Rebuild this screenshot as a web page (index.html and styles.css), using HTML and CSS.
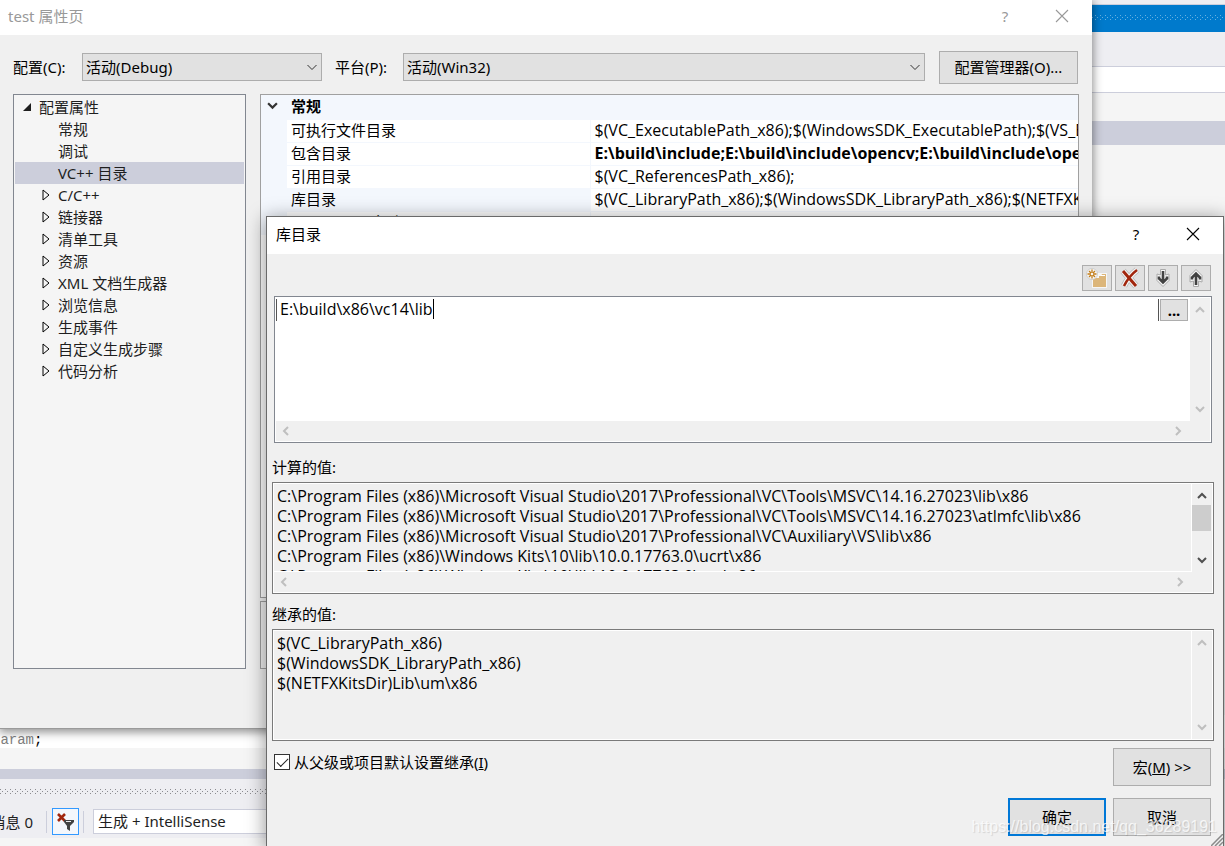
FILE: index.html
```html
<!DOCTYPE html>
<html lang="zh-CN">
<head>
<meta charset="utf-8">
<title>test 属性页</title>
<link rel="stylesheet" href="styles.css">
</head>
<body>
<svg class="defs" aria-hidden="true">
  <defs>
    <symbol id="up" viewBox="0 0 10 7"><path d="M1 6 5 2 9 6" fill="none" stroke="currentColor" stroke-width="2"/></symbol>
    <symbol id="down" viewBox="0 0 10 7"><path d="M1 1 5 5 9 1" fill="none" stroke="currentColor" stroke-width="2"/></symbol>
    <symbol id="left" viewBox="0 0 7 10"><path d="M6 1 2 5 6 9" fill="none" stroke="currentColor" stroke-width="2"/></symbol>
    <symbol id="right" viewBox="0 0 7 10"><path d="M1 1 5 5 1 9" fill="none" stroke="currentColor" stroke-width="2"/></symbol>
    <symbol id="thin-down" viewBox="0 0 10 7"><path d="M.5 1 5 5.500 9.500 1" fill="none" stroke="currentColor"/></symbol>
    <symbol id="close" viewBox="0 0 14 14"><path d="M1 1 13 13M13 1 1 13" fill="none" stroke="currentColor" stroke-width="1.100"/></symbol>
    <symbol id="tri" viewBox="0 0 8 12"><path d="M1 1V11L7 6Z" fill="none" stroke="currentColor"/></symbol>
    <symbol id="tri-open" viewBox="0 0 10 10"><path d="M9 1V9H1Z" fill="currentColor"/></symbol>
    <pattern id="dots-blue" width="5" height="6" patternUnits="userSpaceOnUse"><path d="M0 0h1v1H0zM2 2h1v1H2zM0 4h1v1H0z" fill="#66b0e0"/></pattern>
    <pattern id="dots-gray" width="5" height="6" patternUnits="userSpaceOnUse"><path d="M0 0h1v1H0zM2 2h1v1H2zM0 4h1v1H0z" fill="#8c8c90"/></pattern>
  </defs>
</svg>

<div class="ide">
  <div class="ide-top"></div>
  <div class="ide-title"><svg class="grip"><rect width="100%" height="6" fill="url(#dots-blue)"/></svg></div>
  <div class="ide-bar"></div>
  <div class="ide-field"></div>
  <div class="ide-gap"></div>
  <div class="ide-strip"></div>
  <div class="ide-body"></div>
  <div class="ide-code"><code><b>'</b>aram<i>;</i></code></div>
  <div class="ide-under"></div>
  <div class="ide-split"></div>
  <div class="ide-panel">
    <svg class="grip"><rect width="100%" height="6" fill="url(#dots-gray)"/></svg>
    <div class="ide-tools">
      <span class="msg"><span>消息 0</span></span>
      <span class="sep"></span>
      <button class="filter" aria-label="清除筛选器">
        <svg viewBox="0 0 20 20"><path d="M3 2 10 9M10 2 3 9" stroke="#a1260d" stroke-width="2.600"/><path d="M9 8H19V10L15 14V19L12 17V14L9 10Z" fill="#424242"/><path d="M11 9.500H16" stroke="#eeeef2"/></svg>
      </button>
      <span class="sep"></span>
      <select class="build" aria-label="生成"><option>生成 + IntelliSense</option></select>
    </div>
  </div>
  <div class="ide-foot"></div>
</div>

<section class="win props" aria-label="test 属性页">
  <header class="bar dim">
    <h1>test 属性页</h1>
    <button class="sys" aria-label="帮助">?</button>
    <button class="sys" aria-label="关闭"><svg class="x"><use href="#close"/></svg></button>
  </header>
  <div class="config">
    <label for="cfg">配置(C):</label>
    <span class="combo"><select id="cfg"><option>活动(Debug)</option></select><svg class="v"><use href="#thin-down"/></svg></span>
    <label for="plat">平台(P):</label>
    <span class="combo wide"><select id="plat"><option>活动(Win32)</option></select><svg class="v"><use href="#thin-down"/></svg></span>
    <button class="btn manager">配置管理器(O)...</button>
  </div>
  <div class="content">
    <ul class="tree">
      <li class="root"><svg class="open"><use href="#tri-open"/></svg>配置属性</li>
      <li><svg class="tri"></svg>常规</li>
      <li><svg class="tri"></svg>调试</li>
      <li class="on"><svg class="tri"></svg>VC++ 目录</li>
      <li><svg class="tri"><use href="#tri"/></svg>C/C++</li>
      <li><svg class="tri"><use href="#tri"/></svg>链接器</li>
      <li><svg class="tri"><use href="#tri"/></svg>清单工具</li>
      <li><svg class="tri"><use href="#tri"/></svg>资源</li>
      <li><svg class="tri"><use href="#tri"/></svg>XML 文档生成器</li>
      <li><svg class="tri"><use href="#tri"/></svg>浏览信息</li>
      <li><svg class="tri"><use href="#tri"/></svg>生成事件</li>
      <li><svg class="tri"><use href="#tri"/></svg>自定义生成步骤</li>
      <li><svg class="tri"><use href="#tri"/></svg>代码分析</li>
    </ul>
    <div class="right">
      <div class="grid">
        <table>
          <colgroup><col class="c-gut"><col class="c-name"><col></colgroup>
          <tr class="group"><td class="gut"><svg class="chev"><use href="#down"/></svg></td><th colspan="2">常规</th></tr>
          <tr><td class="gut"></td><td class="name">可执行文件目录</td><td class="path">$(VC_ExecutablePath_x86);$(WindowsSDK_ExecutablePath);$(VS_ExecutablePath)</td></tr>
          <tr><td class="gut"></td><td class="name">包含目录</td><td class="path bold">E:\build\include;E:\build\include\opencv;E:\build\include\opencv2</td></tr>
          <tr><td class="gut"></td><td class="name">引用目录</td><td class="path">$(VC_ReferencesPath_x86);</td></tr>
          <tr class="sel"><td class="gut"></td><td class="name">库目录</td><td class="path">$(VC_LibraryPath_x86);$(WindowsSDK_LibraryPath_x86);$(NETFXKitsDir)Lib\um\x86</td></tr>
          <tr><td class="gut"></td><td class="name">Windows 运行库目录</td><td class="path">$(WindowsSDK_MetadataPath);</td></tr>
        </table>
      </div>
      <div class="desc"></div>
    </div>
  </div>
</section>

<section class="win lib" aria-label="库目录">
  <header class="bar">
    <h2>库目录</h2>
    <button class="sys" aria-label="帮助">?</button>
    <button class="sys" aria-label="关闭"><svg class="x"><use href="#close"/></svg></button>
  </header>
  <div class="body">
    <div class="tools">
      <button class="tool" aria-label="新行">
        <svg viewBox="0 0 24 22"><path d="M8 6h14v15H7V11H3V3h6z" fill="#f6f6f6"/><path d="M8 20V11H14V9H16L17 7H21V20Z" fill="#dcb67a"/><path d="M16 8.500H20" stroke="#fff"/><circle cx="7" cy="7" r="5.500" fill="#f6f6f6" stroke="#bbb" stroke-width=".6"/><path d="M7 2.500V11.500M2.500 7H11.500M4 4 10 10M10 4 4 10" stroke="#c27d1a" stroke-width="1.300"/><circle cx="7" cy="7" r="1.300" fill="#f6f6f6"/></svg>
      </button>
      <button class="tool" aria-label="删除">
        <svg viewBox="0 0 24 22"><path d="M5 4 18 19M19 3Q11 9 6 19" stroke="#b8b8b8" stroke-width="6.500" fill="none"/><path d="M5 4 18 19M19 3Q11 9 6 19" stroke="#f6f6f6" stroke-width="5" fill="none"/><path d="M5 4 18 19" stroke="#a1260d" stroke-width="3"/><path d="M19 3Q11 9 6 19" stroke="#a1260d" stroke-width="2.500" fill="none"/></svg>
      </button>
      <button class="tool" aria-label="下移">
        <svg viewBox="0 0 24 22"><path d="M9.500 2.500h5v5.500l3.500-1v6.500l-6 6-6-6V7l3.500 1z" fill="#f6f6f6" stroke="#aaa"/><path d="M12 4V15M8 9.500V11.500L12 15.500 16 11.500V9.500" fill="none" stroke="#424242" stroke-width="2.600"/></svg>
      </button>
      <button class="tool" aria-label="上移">
        <svg viewBox="0 0 24 22"><path d="M9.500 19.500h5V14l3.500 1V8.500l-6-6-6 6V15l3.500-1z" fill="#f6f6f6" stroke="#aaa"/><path d="M12 18V7M8 12.500V10.500L12 6.500 16 10.500V12.500" fill="none" stroke="#424242" stroke-width="2.600"/></svg>
      </button>
    </div>
    <div class="box edit">
      <div class="lines">
        <div class="line">
          <div class="entry"><input class="path" value="E:\build\x86\vc14\lib" aria-label="目录"><span class="caret"></span></div>
          <button class="btn more" aria-label="浏览">...</button>
        </div>
      </div>
      <div class="sv"><svg class="v"><use href="#up"/></svg><svg class="v"><use href="#down"/></svg></div>
      <div class="sh"><svg class="h"><use href="#left"/></svg><svg class="h"><use href="#right"/></svg></div>
      <div class="sc"></div>
    </div>
    <label class="cap first" for="calc">计算的值:</label>
    <div class="box calc">
      <textarea class="path" id="calc" readonly wrap="off">C:\Program Files (x86)\Microsoft Visual Studio\2017\Professional\VC\Tools\MSVC\14.16.27023\lib\x86
C:\Program Files (x86)\Microsoft Visual Studio\2017\Professional\VC\Tools\MSVC\14.16.27023\atlmfc\lib\x86
C:\Program Files (x86)\Microsoft Visual Studio\2017\Professional\VC\Auxiliary\VS\lib\x86
C:\Program Files (x86)\Windows Kits\10\lib\10.0.17763.0\ucrt\x86
C:\Program Files (x86)\Windows Kits\10\lib\10.0.17763.0\um\x86</textarea>
      <div class="sv live"><svg class="v"><use href="#up"/></svg><span class="thumb"></span><svg class="v"><use href="#down"/></svg></div>
      <div class="sh"><svg class="h"><use href="#left"/></svg><svg class="h"><use href="#right"/></svg></div>
      <div class="sc"></div>
    </div>
    <label class="cap" for="inh">继承的值:</label>
    <div class="box inh">
      <textarea class="path" id="inh" readonly wrap="off">$(VC_LibraryPath_x86)
$(WindowsSDK_LibraryPath_x86)
$(NETFXKitsDir)Lib\um\x86</textarea>
      <div class="sv"><svg class="v"><use href="#up"/></svg><svg class="v"><use href="#down"/></svg></div>
    </div>
    <div class="opts">
      <label class="check"><input type="checkbox" checked><span>从父级或项目默认设置继承(<u>I</u>)</span></label>
      <button class="btn act">宏(<u>M</u>) &gt;&gt;</button>
    </div>
    <div class="acts">
      <button class="btn act ok">确定</button>
      <button class="btn act">取消</button>
    </div>
  </div>
  <svg class="size" viewBox="0 0 12 12"><path d="M0 12 12 0M4 12 12 4M8 12 12 8" stroke="#8a8a8a" stroke-width="1.500"/></svg>
</section>
<div class="mark">https://blog.csdn.net/qq_36289191</div>
</body>
</html>
```
FILE: styles.css
```css
* { box-sizing: border-box; }
body {
  margin: 0;
  height: 100vh;
  overflow: hidden;
  position: relative;
  font: 15px/20px "Noto Sans", "Noto Sans CJK SC", sans-serif;
  color: #000;
}
button, select, input, textarea { font: inherit; color: inherit; margin: 0; border-radius: 0; }
svg { display: block; flex: none; }
.defs { position: absolute; width: 0; height: 0; }

/* IDE behind the dialogs */
.ide { height: 100%; display: flex; flex-direction: column; background: #f5f5f5; }
.ide > div { flex: none; }
.ide-top { height: 5px; background: #eeeef2; border-bottom: 1px solid #cccedb; }
.ide-title { height: 27px; padding-top: 10px; background: #007acc; }
.grip { width: 100%; height: 6px; }
.ide-bar { height: 34px; background: #eeeef2; }
.ide-field { height: 27px; background: #fff; border: solid #cccedb; border-width: 1px 0; }
.ide-gap { height: 28px; background: #f5f5f5; }
.ide-strip { height: 24px; background: #cccedb; }
.ide > .ide-body { flex: 1; background: #f5f5f5; }
.ide-code { height: 33px; padding-top: 16px; background: #fff; }
.ide-code code { display: block; font: 14px/18px "Liberation Mono", monospace; color: #808080; margin-left: -8px; }
.ide-code b { color: #2b91af; font-weight: normal; }
.ide-code i { color: #000; font-style: normal; }
.ide-under { height: 21px; }
.ide-split { height: 10px; background: #cccedb; }
.ide-panel { height: 59px; padding-top: 10px; background: #eeeef2; }
.ide-tools { display: flex; align-items: center; padding-top: 12px; color: #1e1e1e; height: 41px; }
.msg { width: 33px; display: flex; justify-content: flex-end; overflow: hidden; white-space: nowrap; }
.msg span { flex: none; }
.sep { width: 1px; height: 22px; margin-left: 13px; background: #cccedb; }
.filter { width: 27px; height: 27px; margin-left: 5px; padding: 2px; border: 1px solid #3399ff; background: #f4f7fc; }
.filter svg { width: 20px; height: 20px; }
.filter + .sep { margin-left: 4px; }
.build { width: 240px; height: 25px; margin-left: 9px; padding: 0 4px 2px; appearance: none; background: #fff; border: 1px solid #cccedb; }
.ide-foot { height: 8px; background: #f5f5f5; }

/* Windows */
.win { position: absolute; display: flex; flex-direction: column; background: #f0f0f0; }
.props { left: 0; top: 0; right: 133px; bottom: 117px; border-bottom: 1px solid #9a9a9a; box-shadow: 0 2px 9px 1px rgba(0, 0, 0, .45); }
.lib { left: 266px; top: 216px; right: 1px; bottom: 0; border: solid #6a6a6a; border-width: 1px 1px 0; box-shadow: 0 3px 18px 1px rgba(0, 0, 0, .4); }
.bar { flex: none; display: flex; align-items: center; height: 35px; padding: 0 7px 2px 8px; background: #fff; }
.lib .bar { height: 37px; padding-left: 9px; }
.bar h1, .bar h2 { flex: 1; margin: 0; padding-bottom: 1px; font: inherit; }
.dim { color: #999; }
.sys { display: grid; place-items: center; width: 46px; height: 32px; margin-left: 11px; padding: 0 0 1px; border: 0; background: none; }
.x { width: 14px; height: 14px; }
.btn { padding: 0; border: 1px solid #adadad; background: #e1e1e1; }

.config { flex: none; display: flex; align-items: center; height: 64px; padding: 0 14px 0 13px; }
.config label { width: 69px; flex: none; padding-bottom: 1px; }
.config .combo + label { margin-left: 13px; width: 68px; }
.combo { position: relative; width: 240px; }
.combo.wide { flex: 1; }
.combo select { display: block; width: 100%; height: 28px; padding: 0 3px; appearance: none; border: 1px solid #adadad; background: #e1e1e1; }
.combo .v { position: absolute; right: 5px; top: 11px; color: #333; pointer-events: none; }
.v { width: 10px; height: 7px; }
.h { width: 7px; height: 10px; }
.manager { width: 139px; height: 33px; margin-left: 14px; }

.content { flex: 1; display: flex; gap: 14px; margin-top: -5px; padding: 0 13px 59px; min-height: 0; }
.tree { flex: none; width: 233px; margin: 0; padding: 1px; list-style: none; border: 1px solid #828790; background: #f5f5f5; color: #1e1e1e; }
.tree li { display: flex; align-items: center; height: 22px; padding-left: 27px; }
.tree .root { padding-left: 7px; }
.tree .on { background: #cccedb; }
.open { width: 10px; height: 10px; margin-right: 7px; }
.tri { width: 8px; height: 12px; margin-right: 8px; color: #000; }
.right { flex: 1; min-width: 0; display: flex; flex-direction: column; gap: 3px; }
.grid { flex: 1; border: 1px solid #a0a0a0; background: #fff; overflow: hidden; }
.desc { flex: none; height: 68px; border: 1px solid #a0a0a0; }
table { width: 100%; border-collapse: collapse; table-layout: fixed; }
tr { height: 23px; }
td, th { padding: 0 4px 2px; text-align: left; white-space: nowrap; overflow: hidden; line-height: 20px; border-bottom: 1px solid #f3f7fd; }
tr td:last-child { padding-right: 0; }
.group, .gut, .sel .name { background: #f3f7fd; }
.group td, .group th { height: 24px; }
.c-gut { width: 26px; }
.c-name { width: 303px; }
.gut { padding-left: 6px; }
.name { border-right: 1px solid #f3f7fd; }
.bold { font-weight: bold; }
.chev { width: 11px; height: 8px; color: #333; }

/* Library directories dialog */
.body { flex: 1; display: flex; flex-direction: column; padding: 11px 9px 0 5px; }
.tools { display: flex; justify-content: flex-end; gap: 3px; padding-right: 3px; }
.tool { width: 30px; height: 26px; padding: 1px 2px; border: 1px solid #adadad; background: #e1e1e1; }
.tool svg { width: 24px; height: 22px; }
.box { display: grid; grid-template-columns: 1fr 20px; grid-template-rows: 1fr 20px; border: 1px solid #7a7a7a; background: #f0f0f0; padding: 1px; }
.edit { height: 147px; margin: 5px 2px 0; border-color: #828790; box-shadow: inset 0 0 0 1px #fff; }
.lines { background: #fff; }
.line { display: flex; gap: 1px; padding: 1px 2px 0 0; }
.entry { flex: 1; display: flex; align-items: flex-start; height: 22px; border: solid #555; border-width: 0 1px; padding-left: 3px; }
.entry input { field-sizing: content; border: 0; padding: 0; outline: 0; background: none; height: 20px; }
.path, .entry .path { font-family: "Open Sans", sans-serif; font-size: 16px; }
.caret { width: 1px; height: 20px; background: #000; }
.more { width: 28px; height: 22px; line-height: 20px; font-weight: bold; }
.sv { display: flex; flex-direction: column; align-items: center; justify-content: space-between; padding: 8px 1px 8px 0; color: #bfbfbf; }
.sh { display: flex; align-items: center; justify-content: space-between; padding: 0 8px 0 6px; color: #bfbfbf; }
.cap { padding-top: 10px; height: 35px; }
.cap.first { padding-top: 14px; height: 39px; }
.calc { height: 112px; box-shadow: inset 0 0 0 1px #fff; }
.calc textarea { border-bottom: 1px solid #fff; }
textarea { width: 100%; height: 100%; padding: 2px 3px 0; border: solid #fff; border-width: 0 1px 0 0; outline: 0; resize: none; overflow: hidden; background: none; line-height: 20px; display: block; }
.live { color: #505050; justify-content: flex-start; }
.thumb { width: 19px; height: 26px; margin: 6px 0 auto; background: #cdcdcd; }
.inh { height: 112px; grid-template-rows: 1fr; box-shadow: inset 0 0 0 1px #fff; }
.opts { display: flex; justify-content: space-between; align-items: flex-start; padding: 7px 3px 0 2px; }
.check { display: flex; align-items: center; gap: 4px; padding-top: 4px; }
.check input { appearance: none; width: 16px; height: 16px; border: 1px solid #333; background: #fff; display: grid; place-items: center; }
.check input::after { content: ""; width: 10px; height: 5px; margin-top: -3px; border: solid #222; border-width: 0 0 1px 1px; rotate: -45deg; }
.act { width: 98px; height: 38px; }
.ok { border: 2px solid #0078d7; }
.acts { display: flex; justify-content: flex-end; gap: 7px; padding: 12px 3px 0 0; }
.size { position: absolute; right: 0; bottom: 0; width: 12px; height: 12px; }
.mark { position: absolute; right: 8px; bottom: 9px; font: 16px/20px "Liberation Sans", Arial, sans-serif; color: rgba(255, 255, 255, .75); text-shadow: 1px 1px 1px rgba(0, 0, 0, .12); pointer-events: none; }
```
